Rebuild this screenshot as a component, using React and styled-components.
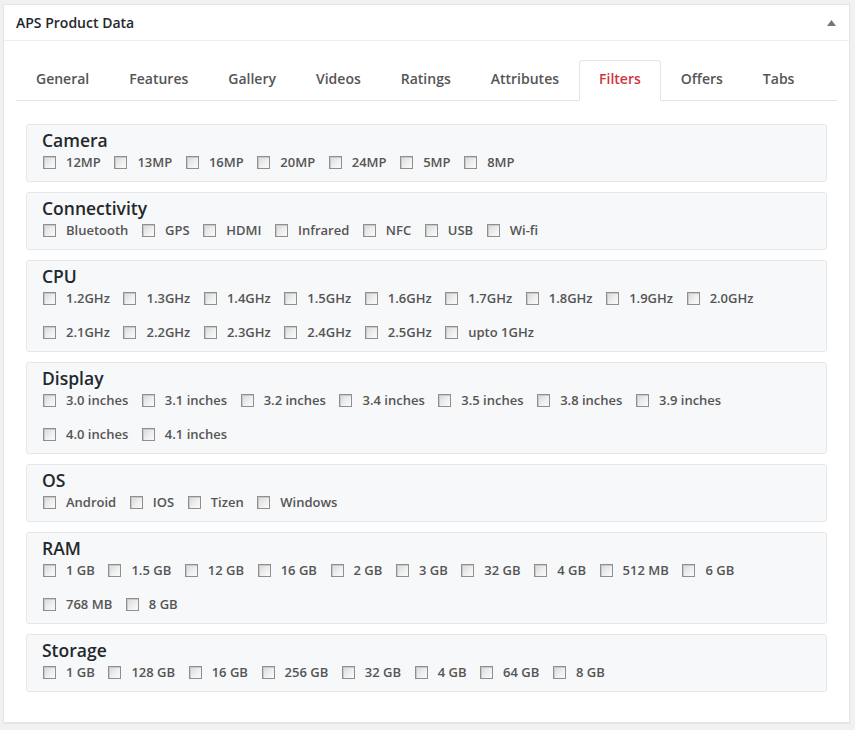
import React from 'react'
import styled, { createGlobalStyle } from 'styled-components'

const GlobalStyle = createGlobalStyle`
	html, body {
		margin: 0;
		padding: 0;
		background: #f1f1f1;
		font-family: "Open Sans", "Liberation Sans", sans-serif;
	}
`

const tabs = ['General', 'Features', 'Gallery', 'Videos', 'Ratings', 'Attributes', 'Filters', 'Offers', 'Tabs']

const filters = [
	{ name: 'Camera', items: ['12MP', '13MP', '16MP', '20MP', '24MP', '5MP', '8MP'] },
	{ name: 'Connectivity', items: ['Bluetooth', 'GPS', 'HDMI', 'Infrared', 'NFC', 'USB', 'Wi-fi'] },
	{
		name: 'CPU',
		items: ['1.2GHz', '1.3GHz', '1.4GHz', '1.5GHz', '1.6GHz', '1.7GHz', '1.8GHz', '1.9GHz', '2.0GHz',
			'2.1GHz', '2.2GHz', '2.3GHz', '2.4GHz', '2.5GHz', 'upto 1GHz']
	},
	{
		name: 'Display',
		items: ['3.0 inches', '3.1 inches', '3.2 inches', '3.4 inches', '3.5 inches', '3.8 inches', '3.9 inches',
			'4.0 inches', '4.1 inches']
	},
	{ name: 'OS', items: ['Android', 'IOS', 'Tizen', 'Windows'] },
	{
		name: 'RAM',
		items: ['1 GB', '1.5 GB', '12 GB', '16 GB', '2 GB', '3 GB', '32 GB', '4 GB', '512 MB', '6 GB', '768 MB', '8 GB']
	},
	{ name: 'Storage', items: ['1 GB', '128 GB', '16 GB', '256 GB', '32 GB', '4 GB', '64 GB', '8 GB'] },
]

function App() {
	return (
		<>
			<GlobalStyle />
			<Page>
				<Postbox>
					<Header>
						<h2>APS Product Data</h2>
						<svg width="9" height="6" viewBox="0 0 9 6">
							<polygon points="4.5,0 9,6 0,6" fill="#72777c" />
						</svg>
					</Header>
					<Inside>
						<TabNav>
							{tabs.map(t => (
								<Tab key={t} $active={t === 'Filters'}>{t}</Tab>
							))}
						</TabNav>
						<FilterList>
							{filters.map(f => (
								<FilterBox key={f.name}>
									<h4>{f.name}</h4>
									<Options>
										{f.items.map(i => (
											<Option key={i}>
												<Check type="checkbox" />
												<span>{i}</span>
											</Option>
										))}
									</Options>
								</FilterBox>
							))}
						</FilterList>
					</Inside>
				</Postbox>
			</Page>
		</>
	)
}

const Page = styled.div`
	padding: 4px 5px 6px 3px;
`

const Postbox = styled.div`
	background: #fff;
	border: 1px solid #e5e5e5;
	box-shadow: 0 1px 1px rgba(0, 0, 0, 0.04);
`

const Header = styled.div`
	display: flex;
	align-items: center;
	justify-content: space-between;
	padding: 8px 13px 8px 12px;
	border-bottom: 1px solid #eee;

	h2 {
		margin: 0;
		font-size: 14px;
		line-height: 19px;
		font-weight: 600;
		color: #23282d;
	}

	svg {
		margin-top: 1px;
	}
`

const Inside = styled.div`
	padding: 19px 12px 30px;
`

const TabNav = styled.ul`
	display: flex;
	margin: 0;
	padding: 0 0 0 1px;
	list-style: none;
	border-bottom: 1px solid #e5e5e5;
`

const Tab = styled.li`
	height: 39px;
	line-height: 36px;
	padding: 0 19px;
	margin-bottom: -1px;
	font-size: 14px;
	font-weight: 600;
	color: ${({ $active }) => ($active ? '#d0343c' : '#555')};
	background: ${({ $active }) => ($active ? '#fff' : 'transparent')};
	border: 1px solid ${({ $active }) => ($active ? '#e5e5e5' : 'transparent')};
	border-bottom: 1px solid ${({ $active }) => ($active ? '#fff' : 'transparent')};
	border-radius: 4px 4px 0 0;

	&:first-child {
		margin-left: -1px;
	}
`

const FilterList = styled.div`
	display: flex;
	flex-direction: column;
	gap: 10px;
	margin: 23px 10px 0;
`

const FilterBox = styled.div`
	background: #f7f8fa;
	border: 1px solid #e6e7e9;
	border-radius: 3px;
	padding: 4px 15px 9px;

	h4 {
		margin: 0;
		font-size: 17.5px;
		line-height: 23px;
		font-weight: 600;
		color: #23282d;
	}
`

const Options = styled.div`
	display: flex;
	flex-wrap: wrap;
	column-gap: 12.6px;
	row-gap: 14px;
`

const Option = styled.label`
	display: flex;
	align-items: center;
	height: 20px;
	font-size: 13px;
	font-weight: 600;
	color: #555;

	span {
		margin-left: 10px;
	}
`

const Check = styled.input`
	appearance: none;
	margin: 0 0 0 1px;
	width: 13px;
	height: 13px;
	border: 1px solid #8f8f8f;
	background: linear-gradient(135deg, #d8d8d8 0%, #f0f0f0 60%, #fafafa 100%);
	box-shadow: inset 1px 1px 0 #c9c9c9;
`

export default App
